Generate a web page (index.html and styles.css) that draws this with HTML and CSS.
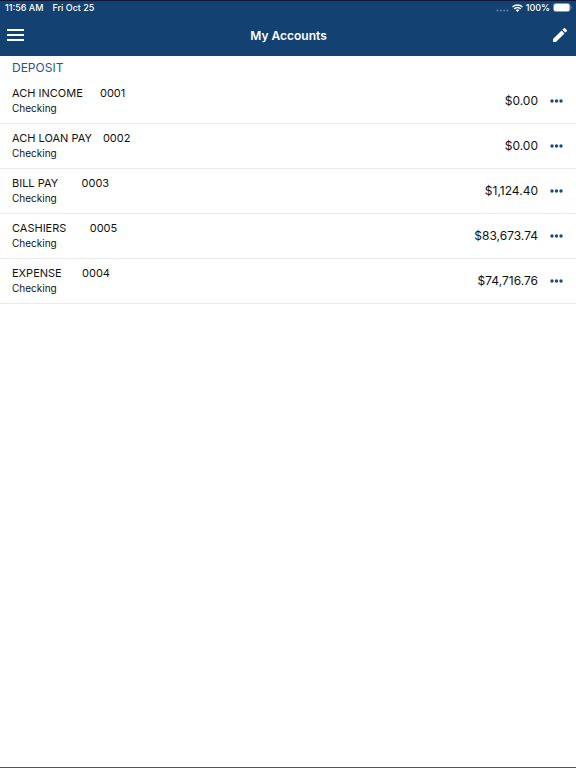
FILE: index.html
```html
<!DOCTYPE html>
<html lang="en">
<head>
<meta charset="utf-8">
<meta name="viewport" content="width=device-width, initial-scale=1">
<title>My Accounts</title>
<link rel="stylesheet" href="styles.css">
</head>
<body>
<header class="top">
  <div class="status">
    <span>11:56 AM</span>
    <span>Fri Oct 25</span>
    <div class="indicators">
      <svg class="signal" width="13" height="8" viewBox="0 0 13 8" fill="#6284a6" aria-hidden="true"><circle cx="1.5" cy="6.5" r="1"/><circle cx="4.8" cy="6.5" r="1"/><circle cx="8.1" cy="6.5" r="1"/><circle cx="11.4" cy="6.5" r="1"/></svg>
      <svg width="11" height="8" viewBox="0 0 11 8" fill="none" stroke="#fff" stroke-width="1.5" aria-hidden="true"><path d="M.5 3a7 7 0 0 1 10 0M2.300 4.900a4.500 4.500 0 0 1 6.400 0"/><path d="M3.700 6.200a2.500 2.500 0 0 1 3.600 0L5.500 8z" fill="#fff" stroke="none"/></svg>
      <span>100%</span>
      <svg width="19" height="9" viewBox="0 0 19 9" aria-hidden="true"><rect x=".5" y=".5" width="16.500" height="8" rx="2.300" fill="none" stroke="#7f9bb7"/><rect x="1" y="1" width="15.500" height="7" rx="1.600" fill="#fff"/><path d="M18 3.200q1.200 1.300 0 2.600z" fill="#7f9bb7"/></svg>
    </div>
  </div>
  <div class="bar">
    <button class="icon" type="button" aria-label="Menu"><svg width="17" height="12" viewBox="0 0 17 12" fill="#fff"><path d="M0 0h17v2H0zM0 5h17v2H0zM0 10h17v2H0z"/></svg></button>
    <h1>My Accounts</h1>
    <button class="icon" type="button" aria-label="Edit"><svg width="14" height="14" viewBox="3 3 18 18" fill="#fff"><path d="M3 17.250V21h3.750L17.810 9.940l-3.750-3.750L3 17.250zM20.710 7.040a1 1 0 0 0 0-1.410l-2.340-2.340a1 1 0 0 0-1.410 0l-1.830 1.830 3.750 3.750 1.830-1.830z"/></svg></button>
  </div>
</header>
<main>
  <h2>DEPOSIT</h2>
  <ul class="accounts">
    <li><div class="info"><div class="title"><span>ACH INCOME  </span><span>0001</span></div><div class="type">Checking</div></div><span class="amount">$0.00</span><button class="more" type="button" aria-label="More options for ACH INCOME"><svg width="13" height="4" viewBox="0 0 13 4"><circle cx="2" cy="2" r="1.700"/><circle cx="6.500" cy="2" r="1.700"/><circle cx="11" cy="2" r="1.700"/></svg></button></li>
    <li><div class="info"><div class="title"><span>ACH LOAN PAY</span><span>0002</span></div><div class="type">Checking</div></div><span class="amount">$0.00</span><button class="more" type="button" aria-label="More options for ACH LOAN PAY"><svg width="13" height="4" viewBox="0 0 13 4"><circle cx="2" cy="2" r="1.700"/><circle cx="6.500" cy="2" r="1.700"/><circle cx="11" cy="2" r="1.700"/></svg></button></li>
    <li><div class="info"><div class="title"><span>BILL PAY    </span><span>0003</span></div><div class="type">Checking</div></div><span class="amount">$1,124.40</span><button class="more" type="button" aria-label="More options for BILL PAY"><svg width="13" height="4" viewBox="0 0 13 4"><circle cx="2" cy="2" r="1.700"/><circle cx="6.500" cy="2" r="1.700"/><circle cx="11" cy="2" r="1.700"/></svg></button></li>
    <li><div class="info"><div class="title"><span>CASHIERS    </span><span>0005</span></div><div class="type">Checking</div></div><span class="amount">$83,673.74</span><button class="more" type="button" aria-label="More options for CASHIERS"><svg width="13" height="4" viewBox="0 0 13 4"><circle cx="2" cy="2" r="1.700"/><circle cx="6.500" cy="2" r="1.700"/><circle cx="11" cy="2" r="1.700"/></svg></button></li>
    <li><div class="info"><div class="title"><span>EXPENSE   </span><span>0004</span></div><div class="type">Checking</div></div><span class="amount">$74,716.76</span><button class="more" type="button" aria-label="More options for EXPENSE"><svg width="13" height="4" viewBox="0 0 13 4"><circle cx="2" cy="2" r="1.700"/><circle cx="6.500" cy="2" r="1.700"/><circle cx="11" cy="2" r="1.700"/></svg></button></li>
  </ul>
</main>
</body>
</html>
```
FILE: styles.css
```css
* { box-sizing: border-box; }
body {
  margin: 0;
  min-height: 100vh;
  background: #fff;
  color: #111;
  font-family: Inter, "Liberation Sans", sans-serif;
  border-bottom: 1px solid #555;
}
svg { display: block; }
button { border: 0; padding: 0; background: none; cursor: pointer; }
.top { background: #134272; color: #fff; border-top: 1px solid #10183a; }
.status {
  display: flex;
  align-items: center;
  gap: 9px;
  height: 13px;
  padding: 0 4px 0 5px;
  font-size: 9px;
  font-weight: 500;
}
.indicators { display: flex; align-items: center; gap: 3px; margin-left: auto; }
.bar {
  display: flex;
  align-items: center;
  justify-content: space-between;
  height: 42px;
  padding: 0 9px 0 7px;
}
.bar h1 { margin: 0; font-size: 12px; font-weight: 600; }
h2 {
  margin: 0;
  padding: 4px 12px 0;
  color: #2a5485;
  font-size: 12px;
  font-weight: 400;
  line-height: 15px;
}
.accounts { list-style: none; margin: 0; padding: 0; }
.accounts li {
  display: flex;
  align-items: center;
  min-height: 45px;
  padding: 0 13px 0 12px;
  border-bottom: 1px solid #ebebeb;
}
.accounts li:first-child { min-height: 49px; padding-top: 4px; }
.info { flex: 1; padding-bottom: 2px; }
.title { display: flex; gap: 11px; font-size: 11px; line-height: 15px; white-space: pre; }
.type { font-size: 10px; line-height: 14px; }
.amount { font-size: 12px; line-height: 16px; }
.more { margin-left: 12px; fill: #174982; }
```
